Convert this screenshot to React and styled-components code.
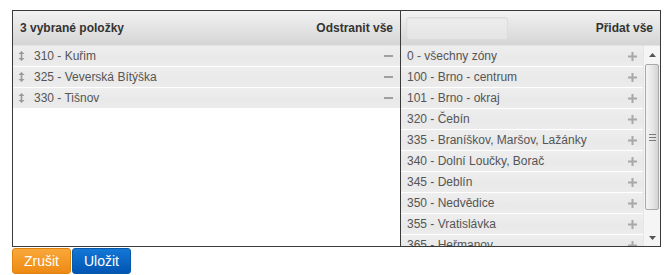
import styled, { createGlobalStyle } from "styled-components";

const GlobalStyle = createGlobalStyle`
  body {
    margin: 0;
    background: #fff;
    font-family: "Liberation Sans", Arial, sans-serif;
  }
`;

const selected = ["310 - Kuřim", "325 - Veverská Bítýška", "330 - Tišnov"];

const available = [
  "0 - všechny zóny",
  "100 - Brno - centrum",
  "101 - Brno - okraj",
  "320 - Čebín",
  "335 - Braníškov, Maršov, Lažánky",
  "340 - Dolní Loučky, Borač",
  "345 - Deblín",
  "350 - Nedvědice",
  "355 - Vratislávka",
  "365 - Heřmanov",
];

function DragIcon() {
  return (
    <svg width="7" height="10" viewBox="0 0 7 10">
      <path d="M3.5 0 L6.5 3 L4.3 3 L4.3 7 L6.5 7 L3.5 10 L0.5 7 L2.7 7 L2.7 3 L0.5 3 Z" fill="#999" />
    </svg>
  );
}

function PlusIcon() {
  return (
    <svg width="9" height="9" viewBox="0 0 9 9">
      <rect x="3.5" y="0" width="2" height="9" fill="#a8a8a8" />
      <rect x="0" y="3.5" width="9" height="2" fill="#a8a8a8" />
    </svg>
  );
}

function MinusIcon() {
  return (
    <svg width="9" height="3" viewBox="0 0 9 3">
      <rect x="0" y="0" width="9" height="2" fill="#a0a0a0" />
    </svg>
  );
}

function Arrow({ up }) {
  return (
    <svg width="7" height="4" viewBox="0 0 7 4">
      <path d={up ? "M0 4 L3.5 0 L7 4 Z" : "M0 0 L3.5 4 L7 0 Z"} fill="#555" />
    </svg>
  );
}

export default function App() {
  return (
    <Page>
      <GlobalStyle />
      <Widget>
        <Pane $width={387}>
          <Header>
            <HeaderTitle>3 vybrané položky</HeaderTitle>
            <HeaderAction>Odstranit vše</HeaderAction>
          </Header>
          <List>
            {selected.map((item) => (
              <Row key={item}>
                <Handle>
                  <DragIcon />
                </Handle>
                <RowText>{item}</RowText>
                <RowButton $right={7}>
                  <MinusIcon />
                </RowButton>
              </Row>
            ))}
          </List>
        </Pane>
        <Divider />
        <Pane $width={259}>
          <Header>
            <Search />
            <HeaderAction>Přidat vše</HeaderAction>
          </Header>
          <ScrollArea>
            <List>
              {available.map((item) => (
                <Row key={item} $pad={6}>
                  <RowText>{item}</RowText>
                  <RowButton $right={6}>
                    <PlusIcon />
                  </RowButton>
                </Row>
              ))}
            </List>
            <Scrollbar>
              <ScrollButton>
                <Arrow up />
              </ScrollButton>
              <Track>
                <Thumb>
                  <Grip />
                  <Grip />
                  <Grip />
                </Thumb>
              </Track>
              <ScrollButton>
                <Arrow />
              </ScrollButton>
            </Scrollbar>
          </ScrollArea>
        </Pane>
      </Widget>
      <Buttons>
        <ActionButton $from="#f9a83a" $to="#ee8a14" $border="#e08410">
          Zrušit
        </ActionButton>
        <ActionButton $from="#1477d6" $to="#0055b3" $border="#0a58a8">
          Uložit
        </ActionButton>
      </Buttons>
    </Page>
  );
}

const Page = styled.div`
  padding: 10px 0 0 12px;
`;

const Widget = styled.div`
  display: flex;
  width: 647px;
  height: 235px;
  border: 1px solid #3a3a3a;
  background: #fff;
`;

const Pane = styled.div`
  display: flex;
  flex-direction: column;
  width: ${(p) => p.$width}px;
  overflow: hidden;
`;

const Divider = styled.div`
  width: 1px;
  background: #3a3a3a;
`;

const Header = styled.div`
  display: flex;
  align-items: center;
  justify-content: space-between;
  height: 34px;
  padding: 0 7px 0 6px;
  background: linear-gradient(#f2f2f2, #d5d5d5);
  border-bottom: 1px solid #e4e4e4;
  flex-shrink: 0;
`;

const HeaderTitle = styled.span`
  font-size: 12px;
  font-weight: bold;
  color: #333;
  padding-left: 1px;
`;

const HeaderAction = styled.span`
  font-size: 12px;
  font-weight: bold;
  color: #333;
`;

const Search = styled.div`
  width: 100px;
  height: 21px;
  margin-left: -1px;
  border: 1px solid #dcdcdc;
  border-radius: 3px;
  background: linear-gradient(#ededed, #e4e4e4);
  box-shadow: inset 0 1px 1px rgba(0, 0, 0, 0.04);
`;

const ScrollArea = styled.div`
  display: flex;
  flex: 1;
  overflow: hidden;
`;

const List = styled.div`
  flex: 1;
  display: flex;
  flex-direction: column;
  gap: 1px;
`;

const Row = styled.div`
  display: flex;
  align-items: center;
  height: 20px;
  flex-shrink: 0;
  padding-left: ${(p) => p.$pad ?? 4}px;
  background: linear-gradient(#eeeeee, #e9e9e9 60%, #ececec);
`;

const Handle = styled.span`
  display: flex;
  width: 16px;
  padding-left: 1px;
`;

const RowText = styled.span`
  flex: 1;
  font-size: 12px;
  color: #555;
  white-space: nowrap;
`;

const RowButton = styled.span`
  display: flex;
  align-items: center;
  margin-right: ${(p) => p.$right}px;
`;

const Scrollbar = styled.div`
  display: flex;
  flex-direction: column;
  width: 16px;
  background: #f5f5f5;
  border-left: 1px solid #e6e6e6;
  flex-shrink: 0;
`;

const ScrollButton = styled.div`
  display: flex;
  align-items: center;
  justify-content: center;
  height: 17px;
  flex-shrink: 0;
`;

const Track = styled.div`
  flex: 1;
  padding: 1px 1px 19px 1px;
  display: flex;
`;

const Thumb = styled.div`
  flex: 1;
  display: flex;
  flex-direction: column;
  align-items: center;
  justify-content: center;
  gap: 2px;
  border: 1px solid #a9a9a9;
  border-radius: 2px;
  background: linear-gradient(90deg, #f4f4f4, #e6e6e6 55%, #d3d3d3);
`;

const Grip = styled.div`
  width: 7px;
  height: 1px;
  background: #7a7a7a;
`;

const Buttons = styled.div`
  display: flex;
  gap: 1px;
  margin-top: 1px;
`;

const ActionButton = styled.button`
  height: 26px;
  padding: 0 11px;
  border: 1px solid ${(p) => p.$border};
  border-radius: 3px;
  background: linear-gradient(${(p) => p.$from}, ${(p) => p.$to});
  color: #fff;
  font-family: "Liberation Sans", Arial, sans-serif;
  font-size: 14px;
  font-weight: normal;
  cursor: pointer;
`;
